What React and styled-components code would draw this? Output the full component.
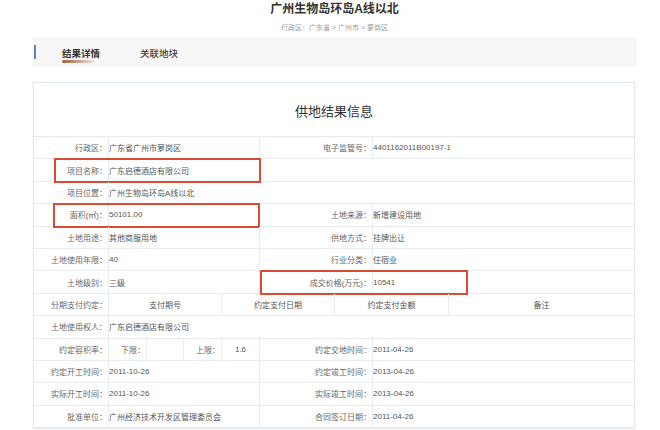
import React from 'react'
import styled, { createGlobalStyle } from 'styled-components'

const GlobalStyle = createGlobalStyle`
  html, body {
    margin: 0;
    padding: 0;
    background: #fff;
    font-family: "Liberation Sans", "Noto Sans CJK SC", sans-serif;
  }
`

const Page = styled.div`
  width: 605px;
  margin-left: 32px;
  height: 430px;
  overflow: hidden;
`

const Title = styled.h1`
  margin: 0;
  padding-top: 1px;
  height: 17px;
  text-align: center;
  font-size: 12px;
  line-height: 17px;
  font-weight: 700;
  color: #333;
`

const Crumbs = styled.div`
  margin-top: 3px;
  text-align: center;
  font-size: 7px;
  line-height: 14px;
  color: #9a9a9a;
`

const TabBar = styled.div`
  margin-top: 2px;
  height: 30px;
  background: #f7f7f7;
  display: flex;
  align-items: center;
  padding-left: 2px;
`

const Accent = styled.span`
  width: 2px;
  height: 14px;
  background: #5c86b3;
  margin-right: 26px;
`

const Tab = styled.div`
  position: relative;
  font-size: 9.5px;
  color: ${p => (p.$active ? '#333' : '#444')};
  font-weight: ${p => (p.$active ? 600 : 500)};
  margin-right: 40px;
  padding-top: 1px;

  &::after {
    content: '';
    display: ${p => (p.$active ? 'block' : 'none')};
    position: absolute;
    left: 0;
    top: 15px;
    width: 32px;
    height: 3px;
    border-radius: 2px;
    background: linear-gradient(90deg, #a45f3a, rgba(200, 140, 100, 0.2));
  }
`

const Card = styled.div`
  margin: 15px 2px 0 1px;
  border: 1px solid #e3e9ef;
  box-shadow: 0 0 2px rgba(180, 195, 210, 0.35);
  background: #fff;
`

const CardHead = styled.div`
  height: 54px;
  display: flex;
  align-items: center;
  justify-content: center;
  font-size: 13px;
  color: #333;
  border-bottom: 1px solid #e6ebf0;
  padding-top: 1px;
  box-sizing: border-box;
`

const Row = styled.div`
  position: relative;
  display: grid;
  grid-template-columns: ${p => p.$cols};
  height: 22.4px;
  box-sizing: border-box;
  border-bottom: 1px solid #e9edf2;
`

const Cell = styled.div`
  display: flex;
  align-items: center;
  justify-content: ${p => (p.$align === 'right' ? 'flex-end' : p.$align === 'center' ? 'center' : 'flex-start')};
  box-sizing: border-box;
  border-right: ${p => (p.$last ? 'none' : '1px solid #e9edf2')};
  font-size: 8px;
  color: ${p => (p.$label ? '#666' : '#555')};
  white-space: nowrap;
  overflow: hidden;
  padding-right: ${p => (p.$align === 'right' ? '1px' : '0')};
`

const Mark = styled.div`
  position: absolute;
  top: -1px;
  height: 25px;
  box-sizing: border-box;
  border: 2px solid #d94b34;
  pointer-events: none;
`

const BASE = '75px 151px 113px 1fr'
const WIDE = '75px 1fr'

const Pair = ({ label, value, label2, value2, mark }) => (
  <Row $cols={BASE}>
    <Cell $label $align="right">{label}</Cell>
    <Cell>{value}</Cell>
    <Cell $label $align="right">{label2}</Cell>
    <Cell $last>{value2}</Cell>
    {mark && <Mark style={{ left: mark[0], width: mark[1] }} />}
  </Row>
)

const Single = ({ label, value, mark }) => (
  <Row $cols={WIDE}>
    <Cell $label $align="right">{label}</Cell>
    <Cell $last>{value}</Cell>
    {mark && <Mark style={{ left: mark[0], width: mark[1] }} />}
  </Row>
)

export default function App() {
  return (
    <>
      <GlobalStyle />
      <Page>
        <Title>广州生物岛环岛A线以北</Title>
        <Crumbs>行政区：广东省 &gt; 广州市 &gt; 萝岗区</Crumbs>
        <TabBar>
          <Accent />
          <Tab $active>结果详情</Tab>
          <Tab>关联地块</Tab>
        </TabBar>
        <Card>
          <CardHead>供地结果信息</CardHead>
          <Pair label="行政区：" value="广东省广州市萝岗区" label2="电子监管号：" value2="4401162011B00197-1" />
          <Single label="项目名称：" value="广东启德酒店有限公司" mark={[20, 207]} />
          <Single label="项目位置：" value="广州生物岛环岛A线以北" />
          <Pair label="面积(㎡)：" value="50101.00" label2="土地来源：" value2="新增建设用地" mark={[19, 207]} />
          <Pair label="土地用途：" value="其他商服用地" label2="供地方式：" value2="挂牌出让" />
          <Pair label="土地使用年限：" value="40" label2="行业分类：" value2="住宿业" />
          <Pair label="土地级别：" value="三级" label2="成交价格(万元)：" value2="10541" mark={[226, 208]} />
          <Row $cols="75px 113px 113px 114px 1fr">
            <Cell $label $align="right">分期支付约定：</Cell>
            <Cell $align="center">支付期号</Cell>
            <Cell $align="center">约定支付日期</Cell>
            <Cell $align="center">约定支付金额</Cell>
            <Cell $align="center" $last>备注</Cell>
          </Row>
          <Single label="土地使用权人：" value="广东启德酒店有限公司" />
          <Row $cols="75px 38px 37px 38px 38px 113px 1fr">
            <Cell $label $align="right">约定容积率：</Cell>
            <Cell $label $align="right">下限：</Cell>
            <Cell />
            <Cell $label $align="right">上限：</Cell>
            <Cell $align="center">1.6</Cell>
            <Cell $label $align="right">约定交地时间：</Cell>
            <Cell $last>2011-04-26</Cell>
          </Row>
          <Pair label="约定开工时间：" value="2011-10-26" label2="约定竣工时间：" value2="2013-04-26" />
          <Pair label="实际开工时间：" value="2011-10-26" label2="实际竣工时间：" value2="2013-04-26" />
          <Pair label="批准单位：" value="广州经济技术开发区管理委员会" label2="合同签订日期：" value2="2011-04-26" />
        </Card>
      </Page>
    </>
  )
}
